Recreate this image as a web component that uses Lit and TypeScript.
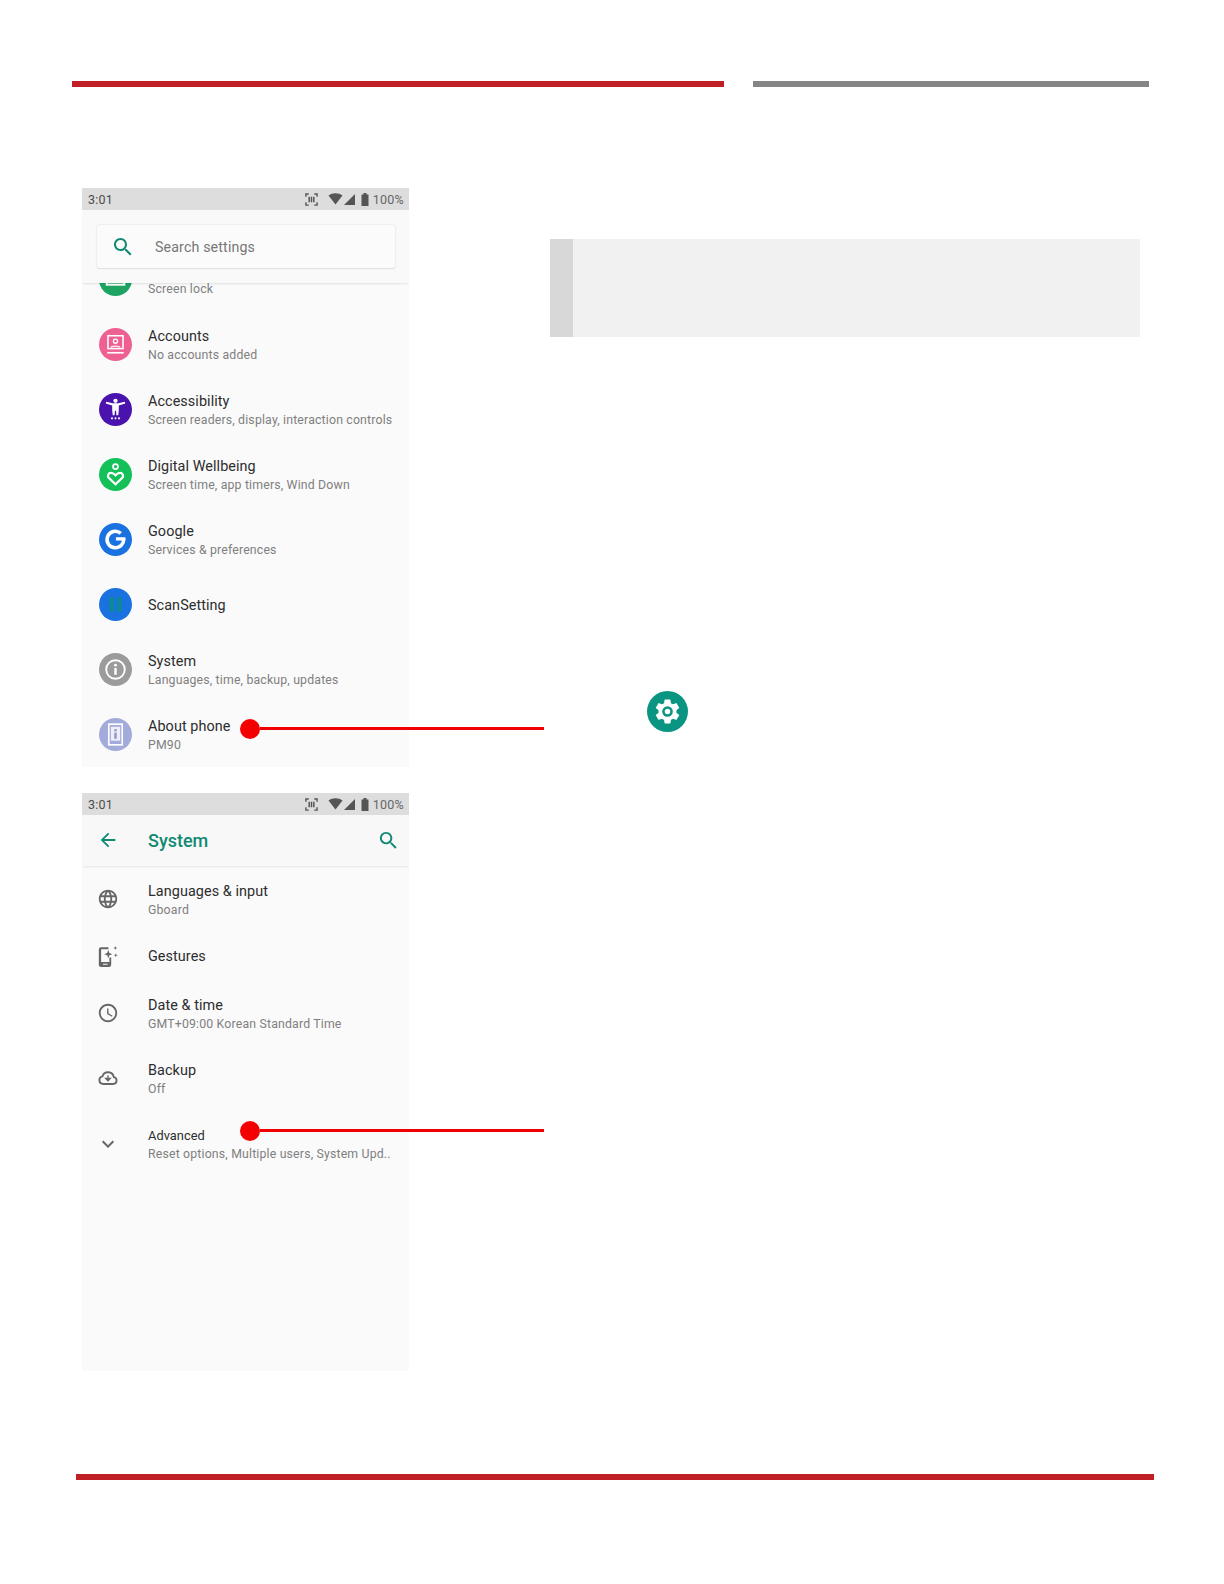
import { LitElement, html, css, svg } from "lit";
import { customElement } from "lit/decorators.js";

const P = {
  search: "M15.5 14h-.79l-.28-.27C15.41 12.59 16 11.11 16 9.5 16 5.91 13.09 3 9.5 3S3 5.91 3 9.5 5.91 16 9.5 16c1.61 0 3.09-.59 4.23-1.57l.27.28v.79l5 4.99L20.49 19l-4.99-5zm-6 0C7.01 14 5 11.99 5 9.5S7.01 5 9.5 5 14 7.01 14 9.5 11.99 14 9.5 14z",
  back: "M20 11H7.83l5.59-5.59L12 4l-8 8 8 8 1.41-1.41L7.83 13H20v-2z",
  globe: "M11.99 2C6.47 2 2 6.48 2 12s4.47 10 9.99 10C17.52 22 22 17.52 22 12S17.52 2 11.99 2zm6.93 6h-2.95c-.32-1.25-.78-2.45-1.38-3.56 1.84.63 3.37 1.91 4.33 3.56zM12 4.04c.83 1.2 1.48 2.53 1.91 3.96h-3.82c.43-1.43 1.08-2.76 1.91-3.96zM4.26 14C4.1 13.36 4 12.69 4 12s.1-1.36.26-2h3.38c-.08.66-.14 1.32-.14 2 0 .68.06 1.34.14 2H4.26zm.82 2h2.95c.32 1.25.78 2.45 1.38 3.56-1.84-.63-3.37-1.9-4.33-3.56zm2.95-8H5.08c.96-1.66 2.49-2.93 4.33-3.56C8.81 5.55 8.35 6.75 8.03 8zM12 19.96c-.83-1.2-1.48-2.53-1.91-3.96h3.82c-.43 1.43-1.08 2.76-1.91 3.96zM14.34 14H9.66c-.09-.66-.16-1.32-.16-2 0-.68.07-1.35.16-2h4.68c.09.65.16 1.32.16 2 0 .68-.07 1.34-.16 2zm.25 5.56c.6-1.11 1.06-2.31 1.38-3.56h2.95c-.96 1.65-2.49 2.93-4.33 3.56zM16.36 14c.08-.66.14-1.32.14-2 0-.68-.06-1.34-.14-2h3.38c.16.64.26 1.31.26 2s-.1 1.36-.26 2h-3.38z",
  clock: "M11.99 2C6.47 2 2 6.48 2 12s4.47 10 9.99 10C17.52 22 22 17.52 22 12S17.52 2 11.99 2zM12 20c-4.42 0-8-3.58-8-8s3.58-8 8-8 8 3.58 8 8-3.58 8-8 8zm.5-13H11v6l5.25 3.15.75-1.23-4.5-2.67z",
  chevron: "M16.59 8.59L12 13.17 7.41 8.59 6 10l6 6 6-6z",
  gear: "M19.43 12.98c.04-.32.07-.64.07-.98s-.03-.66-.07-.98l2.11-1.65c.19-.15.24-.42.12-.64l-2-3.46c-.12-.22-.39-.3-.61-.22l-2.49 1c-.52-.4-1.08-.73-1.69-.98l-.38-2.65C14.46 2.18 14.25 2 14 2h-4c-.25 0-.46.18-.49.42l-.38 2.65c-.61.25-1.17.59-1.69.98l-2.49-1c-.23-.09-.49 0-.61.22l-2 3.46c-.13.22-.07.49.12.64l2.11 1.65c-.04.32-.07.65-.07.98s.03.66.07.98l-2.11 1.65c-.19.15-.24.42-.12.64l2 3.46c.12.22.39.3.61.22l2.49-1c.52.4 1.08.73 1.69.98l.38 2.65c.03.24.24.42.49.42h4c.25 0 .46-.18.49-.42l.38-2.65c.61-.25 1.17-.59 1.69-.98l2.49 1c.23.09.49 0 .61-.22l2-3.46c.12-.22.07-.49-.12-.64l-2.11-1.65z",
};

const glyphs: Record<string, unknown> = {
  lock: svg`<rect x="7.5" y="2" width="17" height="19" fill="none" stroke="#fff" stroke-width="2"/><rect x="13" y="8" width="6" height="8" fill="#fff"/>`,
  accounts: svg`<rect x="8.700" y="7.500" width="14.600" height="12.500" fill="none" stroke="#fff" stroke-width="1.500"/><circle cx="16" cy="12.800" r="2" fill="none" stroke="#fff" stroke-width="1.300"/><path d="M11.500 19c1-2 8-2 9 0" fill="none" stroke="#fff" stroke-width="1.200"/><path d="M8 24h16" fill="none" stroke="#fff" stroke-width="1.600"/>`,
  access: svg`<circle cx="16" cy="7.600" r="2.100" fill="#fff"/><path d="M6.500 10.300l6.300 1.700v4.600l.5 4.900h1.800l.3-4.200h1.200l.3 4.200h1.800l.5-4.900V12l6.300-1.700-.5-1.800-6.300 1.500h-5.400L7 8.500z" fill="#fff"/><circle cx="12.600" cy="24.600" r="1" fill="#fff"/><circle cx="16" cy="24.600" r="1" fill="#fff"/><circle cx="19.400" cy="24.600" r="1" fill="#fff"/>`,
  well: svg`<circle cx="16" cy="8.300" r="2.400" fill="none" stroke="#fff" stroke-width="1.700"/><path d="M16 25.500l-6.500-6.200c-1.800-2-.4-4.900 2-4.900 1.900 0 3.300.9 4.500 2.300 1.200-1.400 2.600-2.300 4.500-2.300 2.400 0 3.800 2.900 2 4.900z" fill="none" stroke="#fff" stroke-width="2.100"/>`,
  google: svg`<path d="M24 15.200c.1 5-3.400 8.800-8.200 8.800a8 8 0 1 1 5.300-14" fill="none" stroke="#fff" stroke-width="3.400"/><path d="M16.400 13.800h9.200v3.200h-9.200z" fill="#fff"/>`,
  scan: svg`<rect x="10" y="9" width="4.500" height="14" fill="#0a8f86" opacity=".8"/><rect x="17.500" y="9" width="4.500" height="14" fill="#0a8f86" opacity=".8"/>`,
  info: svg`<circle cx="16" cy="16" r="9" fill="none" stroke="#fff" stroke-width="1.800"/><rect x="14.800" y="14.600" width="2.400" height="6.500" fill="#fff"/><circle cx="16" cy="11.800" r="1.400" fill="#fff"/>`,
  phone: svg`<rect x="9.500" y="6" width="13" height="20" fill="none" stroke="#fff" stroke-width="1.600"/><rect x="11.500" y="8.500" width="9" height="13.500" fill="#fff" opacity=".8"/><rect x="14.800" y="14.200" width="2.400" height="6" fill="#8e97cf"/><rect x="14.800" y="10.800" width="2.400" height="2.200" fill="#8e97cf"/>`,
};

const gesture = svg`<path fill-rule="evenodd" d="M4.500 2.500h8v2H4.500v14h9v-5h2v8a2.500 2.500 0 0 1-2.500 2.500H4.500A2.500 2.500 0 0 1 2 21V5a2.500 2.500 0 0 1 2.500-2.500zM6.500 20.500v1h5v-1z" fill="currentColor"/><path d="M12.300 5.500l1.200 3.300 3.300 1.200-3.300 1.200-1.200 3.300-1.200-3.300-3.300-1.200 3.300-1.200zM20 1l.6 1.600 1.600.6-1.600.6-.6 1.600-.6-1.600-1.600-.6 1.600-.6zM20.500 9l.6 1.600 1.600.6-1.600.6-.6 1.600-.6-1.600-1.600-.6 1.600-.6z" fill="currentColor"/>`;
const cloud = svg`<path d="M6.500 18.500a4.200 4.200 0 0 1-.6-8.300A6.400 6.400 0 0 1 18.300 11a3.800 3.800 0 0 1-.3 7.500z" fill="none" stroke="currentColor" stroke-width="2"/><path d="M12 9v4M9.500 12.500l2.500 2.500 2.500-2.500z" fill="currentColor" stroke="currentColor" stroke-width="1.400"/>`;

type Row = { icon: string; color: string; title: string; sub?: string };
const rows1: Row[] = [
  { icon: "accounts", color: "#ee5f92", title: "Accounts", sub: "No accounts added" },
  { icon: "access", color: "#4a13ad", title: "Accessibility", sub: "Screen readers, display, interaction controls" },
  { icon: "well", color: "#14c158", title: "Digital Wellbeing", sub: "Screen time, app timers, Wind Down" },
  { icon: "google", color: "#1a72e0", title: "Google", sub: "Services & preferences" },
  { icon: "scan", color: "#1a72e0", title: "ScanSetting" },
  { icon: "info", color: "#9b9b9b", title: "System", sub: "Languages, time, backup, updates" },
  { icon: "phone", color: "#a3abdb", title: "About phone", sub: "PM90" },
];

@customElement("app-root")
export class AppRoot extends LitElement {
  static styles = css`
    :host { display: block; width: 1224px; height: 1584px; background: #fff; font-family: Roboto, "Liberation Sans", sans-serif; overflow: hidden; }
    .top { display: flex; padding: 81px 0 0 72px; gap: 29px; }
    .bar { height: 6px; }
    .red { background: #c01f26; }
    .t1 { width: 652px; }
    .t2 { width: 396px; background: #858585; }
    .main { display: flex; height: 1387px; padding: 101px 0 0 82px; box-sizing: border-box; }
    .left { width: 327px; display: flex; flex-direction: column; gap: 26px; }
    .phone { position: relative; background: #fafafa; filter: blur(.35px); }
    .p1 { height: 579px; }
    .p2 { height: 578px; }
    .status { height: 22px; background: #dddddd; display: flex; align-items: center; padding: 0 5px 0 6px; color: #4c4c4c; font-size: 12.5px; letter-spacing: .2px; }
    .status-icons { margin-left: auto; display: flex; align-items: center; }
    .status-icons svg { display: block; }
    .pct { color: #666; margin-left: 4px; font-size: 12.5px; letter-spacing: .25px; }
    .head1 { height: 73px; box-sizing: border-box; padding: 15px 14px 0 15px; background: #f9f9f9; box-shadow: 0 2px 2px -1px rgba(0,0,0,.1); position: relative; z-index: 1; }
    .card { height: 43px; background: #fbfbfb; box-shadow: 0 0 2px rgba(0,0,0,.16), 0 1px 1px rgba(0,0,0,.06); border-radius: 2px; display: flex; align-items: center; padding-left: 14px; color: #777; font-size: 14.2px; letter-spacing: .15px; }
    .card svg { width: 24px; height: 24px; color: #0f8a72; margin-right: 20px; }
    .list1 { height: 484px; overflow: hidden; background: #fafafa; }
    .row { height: 65px; display: flex; align-items: center; }
    .row.short { height: 49px; }
    .first { height: 28.5px; display: flex; align-items: flex-start; overflow: hidden; }
    .first .icon { margin-top: -20.5px; }
    .first .sub { line-height: 13px; }
    .iconcol { width: 66px; flex: none; }
    .icon { width: 33px; height: 33px; margin-left: 17px; display: block; }
    .plain { width: 22px; height: 22px; margin: -3px 0 0 15px; display: block; color: #666; }
    .plain.wide { width: 24px; height: 24px; margin-left: 14px; margin-top: -1px; }
    .txt { margin-top: 4px; }
    .list2 .txt { margin-top: 2px; }
    .list2 .short .txt { margin-top: 0; }
    .list2 .short .plain { margin-top: -3px; margin-left: 15px; }
    .title { font-size: 14.4px; line-height: 18px; color: #2d2d2d; letter-spacing: .07px; }
    .title.small { font-size: 12.8px; letter-spacing: .05px; }
    .sub { font-size: 12.3px; line-height: 18px; color: #7f7f7f; letter-spacing: .17px; white-space: nowrap; }
    .appbar { height: 51px; box-sizing: border-box; background: #f8f8f8; box-shadow: 0 2px 2px -1px rgba(0,0,0,.09); display: flex; align-items: center; color: #0f8a72; position: relative; }
    .appbar .b { width: 22px; height: 22px; margin-left: 15px; margin-top: -2px; }
    .appbar .t { font-size: 18px; font-weight: 500; margin-left: 29px; flex: 1; }
    .appbar .s { width: 23px; height: 23px; margin-right: 9px; }
    .list2 { padding-top: 1.5px; }
    .call { position: absolute; left: 158px; display: flex; align-items: center; width: 304px; pointer-events: none; z-index: 2; }
    .dot { width: 20px; height: 20px; border-radius: 50%; background: #f50000; flex: none; }
    .line { height: 3px; flex: 1; background: #f00000; margin-top: -1px; }
    .c1 { top: 531px; }
    .c2 { top: 328px; }
    .right { margin-left: 141px; display: flex; flex-direction: column; }
    .note { width: 567px; height: 98px; margin-top: 51px; background: #f1f1f1; border-left: 23px solid #d8d8d8; }
    .gear { width: 41px; height: 41px; margin: 354px 0 0 97px; display: block; }
    .t3 { width: 1078px; margin-left: 76px; }
  `;

  row(r: Row) {
    return html`<div class="row">
      <div class="iconcol">
        <svg class="icon" viewBox="0 0 32 32"><circle cx="16" cy="16" r="16" fill=${r.color}></circle>${glyphs[r.icon]}</svg>
      </div>
      <div class="txt">
        <div class="title">${r.title}</div>
        ${r.sub ? html`<div class="sub">${r.sub}</div>` : ""}
      </div>
    </div>`;
  }

  status() {
    return html`<div class="status"><span>3:01</span>
      <div class="status-icons">
        <svg width="13" height="13" viewBox="0 0 14 14" fill="none" stroke="#555"><path d="M1 4V1h3M10 1h3v3M13 10v3h-3M4 13H1v-3" stroke-width="1.500"/><path d="M4.500 4v6M7 4v6M9.500 4v6" stroke-width="1.600"/></svg>
        <svg width="15" height="12" viewBox="0 0 15 12" style="margin-left:10px"><path d="M0.500 2.500C4.500-.6 10.500-.6 14.500 2.500L7.500 11.500z" fill="#555"/></svg>
        <svg width="12" height="12" viewBox="0 0 12 12"><path d="M12 1v11H1z" fill="#555"/></svg>
        <svg width="8" height="13" viewBox="0 0 8 13" style="margin-left:6px"><path d="M2.500 0h3v1.500H7.500V13H.5V1.500h2z" fill="#555"/></svg>
        <span class="pct">100%</span>
      </div></div>`;
  }

  plainRow(icon: unknown, title: string, sub?: string, short = false, small = false, wide = false) {
    return html`<div class="row ${short ? "short" : ""}">
      <div class="iconcol"><svg class="plain ${wide ? "wide" : ""}" viewBox="0 0 24 24" fill="currentColor">${icon}</svg></div>
      <div class="txt">
        <div class="title ${small ? "small" : ""}">${title}</div>
        ${sub ? html`<div class="sub">${sub}</div>` : ""}
      </div>
    </div>`;
  }

  render() {
    return html`
      <div class="top"><div class="bar red t1"></div><div class="bar t2"></div></div>
      <div class="main">
        <div class="left">
          <section class="phone p1">
            ${this.status()}
            <div class="head1"><div class="card">
              <svg viewBox="0 0 24 24" fill="currentColor"><path d=${P.search}></path></svg>
              <span>Search settings</span>
            </div></div>
            <div class="list1">
              <div class="first">
                <div class="iconcol"><svg class="icon" viewBox="0 0 32 32"><circle cx="16" cy="16" r="16" fill="#1da462"></circle>${glyphs.lock}</svg></div>
                <div class="sub">Screen lock</div>
              </div>
              ${rows1.map((r) => this.row(r))}
            </div>
            <div class="call c1"><span class="dot"></span><span class="line"></span></div>
          </section>
          <section class="phone p2">
            ${this.status()}
            <div class="appbar">
              <svg class="b" viewBox="0 0 24 24" fill="currentColor"><path d=${P.back}></path></svg>
              <span class="t">System</span>
              <svg class="s" viewBox="0 0 24 24" fill="currentColor"><path d=${P.search}></path></svg>
            </div>
            <div class="list2">
              ${this.plainRow(svg`<path d=${P.globe}></path>`, "Languages & input", "Gboard")}
              ${this.plainRow(gesture, "Gestures", undefined, true)}
              ${this.plainRow(svg`<path d=${P.clock}></path>`, "Date & time", "GMT+09:00 Korean Standard Time")}
              ${this.plainRow(cloud, "Backup", "Off")}
              ${this.plainRow(svg`<path d=${P.chevron}></path>`, "Advanced", "Reset options, Multiple users, System Upd..", false, true, true)}
            </div>
            <div class="call c2"><span class="dot"></span><span class="line"></span></div>
          </section>
        </div>
        <div class="right">
          <div class="note"></div>
          <svg class="gear" viewBox="0 0 41 41">
            <circle cx="20.500" cy="20.500" r="20.500" fill="#0a9482"></circle>
            <g transform="translate(6.100 6.100) scale(1.200)"><path d=${P.gear} fill="#fff"></path><circle cx="12" cy="12" r="4.400" fill="#0a9482"></circle><circle cx="12" cy="12" r="2.300" fill="#fff"></circle></g>
          </svg>
        </div>
      </div>
      <div class="bar red t3"></div>
    `;
  }
}
